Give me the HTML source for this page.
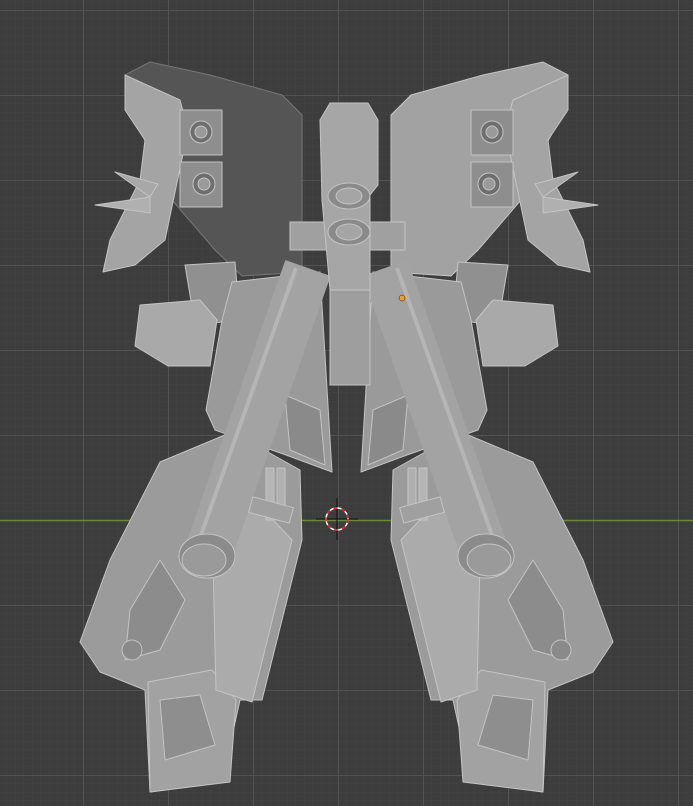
<!DOCTYPE html>
<html><head><meta charset="utf-8"><style>
html,body{margin:0;padding:0;background:#3d3d3d;width:693px;height:806px;overflow:hidden}
svg{display:block}
</style></head><body>
<svg width="693" height="806" viewBox="0 0 693 806" xmlns="http://www.w3.org/2000/svg">
<defs>
<pattern id="minor" width="8.5" height="8.5" patternUnits="userSpaceOnUse" x="83" y="10">
<path d="M0 0H8.5M0 0V8.5" stroke="#444" stroke-width="1" fill="none"/>
</pattern>
<pattern id="major" width="85" height="85" patternUnits="userSpaceOnUse" x="83" y="10">
<path d="M0 0.5H85M0.5 0V85" stroke="#525252" stroke-width="1" fill="none"/>
</pattern>
<g id="half" stroke="#c4c4c4" stroke-width="1" stroke-linejoin="round">
<!-- outer wing panel -->
<polygon points="125,75 180,100 188,130 165,240 135,265 103,272 110,240 140,180 145,140 125,110" fill="#a4a4a4"/>
<polygon points="95,205 150,197 150,213" fill="#b0b0b0"/>
<polygon points="115,172 158,184 150,197" fill="#a8a8a8"/>
<!-- pods -->
<rect x="180" y="110" width="42" height="45" fill="#8e8e8e"/>
<circle cx="201" cy="132" r="11" fill="#6e6e6e"/><circle cx="201" cy="132" r="6" fill="#9a9a9a"/>
<rect x="180" y="162" width="42" height="45" fill="#8e8e8e"/>
<circle cx="204" cy="184" r="11" fill="#6e6e6e"/><circle cx="204" cy="184" r="6" fill="#9a9a9a"/>
<!-- upper arm & shoulder -->
<polygon points="185,265 235,262 240,320 195,325" fill="#909090"/>
<polygon points="140,305 200,300 217,320 210,366 168,366 135,346" fill="#a9a9a9"/>
<!-- skirt -->
<polygon points="232,282 320,272 332,472 286,455 215,430 206,410 222,320" fill="#9a9a9a"/>
<polygon points="285,395 320,410 325,465 290,450" fill="#8a8a8a"/>
<!-- legs -->
<polygon points="110,560 160,462 232,432 300,470 302,540 262,700 240,700 222,782 150,792 145,690 100,672 80,642" fill="#9b9b9b"/>
<polygon points="130,610 160,560 185,600 160,650 125,660" fill="#8c8c8c"/>
<polygon points="148,682 212,670 236,700 230,782 150,792" fill="#a2a2a2"/>
<polygon points="160,700 200,695 215,745 165,760" fill="#8e8e8e"/>
<polygon points="212,520 262,508 292,540 252,702 216,690" fill="#ababab"/>
<circle cx="132" cy="650" r="10" fill="#8a8a8a"/>
<!-- pipes -->
<rect x="266" y="468" width="8" height="52" fill="#b5b5b5"/>
<rect x="277" y="468" width="8" height="52" fill="#b0b0b0"/>
<!-- cannon -->
<line x1="308" y1="268" x2="207" y2="556" stroke="#a3a3a3" stroke-width="48" stroke-linecap="butt"/>
<line x1="296" y1="268" x2="195" y2="552" stroke="#b5b5b5" stroke-width="4"/>
<ellipse cx="207" cy="556" rx="28" ry="22" fill="#8b8b8b"/>
<ellipse cx="204" cy="560" rx="22" ry="16" fill="#9a9a9a"/>
<rect x="250" y="502" width="42" height="16" fill="#a0a0a0" transform="rotate(15 271 510)"/>
</g>
</defs>
<rect width="693" height="806" fill="#3d3d3d"/>
<rect width="693" height="806" fill="url(#minor)"/>
<rect width="693" height="806" fill="url(#major)"/>
<line x1="0" y1="520.5" x2="693" y2="520.5" stroke="#6a8a3a" stroke-width="1.5"/>
<!-- wings -->
<polygon points="125,75 150,62 210,75 282,95 302,115 302,272 242,276 215,250 172,200 150,150 128,110" fill="#555" stroke="#777"/>
<polygon points="568,75 543,62 483,75 411,95 391,115 391,272 451,276 478,250 521,200 543,150 565,110" fill="#a2a2a2" stroke="#c4c4c4"/>
<use href="#half"/>
<use href="#half" transform="translate(693,0) scale(-1,1)"/>
<!-- center -->
<g stroke="#c4c4c4" stroke-width="1">
<rect x="290" y="222" width="115" height="28" fill="#a0a0a0"/>
<rect x="330" y="285" width="40" height="100" fill="#9e9e9e"/>
<polygon points="320,120 330,103 368,103 378,120 378,185 370,195 370,290 330,290 322,200" fill="#a6a6a6"/>
<ellipse cx="349" cy="196" rx="21" ry="13" fill="#8a8a8a"/><ellipse cx="349" cy="196" rx="13" ry="8" fill="#a5a5a5"/>
<ellipse cx="349" cy="232" rx="21" ry="13" fill="#8a8a8a"/><ellipse cx="349" cy="232" rx="13" ry="8" fill="#a5a5a5"/>
</g>
<!-- crosshair -->
<g>
<line x1="337" y1="498" x2="337" y2="540" stroke="#111" stroke-width="1"/>
<line x1="316" y1="519" x2="358" y2="519" stroke="#111" stroke-width="1"/>
<circle cx="337" cy="519" r="11" fill="none" stroke="#fff" stroke-width="1.5"/>
<circle cx="337" cy="519" r="11" fill="none" stroke="#d42020" stroke-width="1.5" stroke-dasharray="4 4"/>
</g>
<circle cx="402" cy="298" r="3" fill="#f39c1e" stroke="#222" stroke-width="0.5"/>
</svg>
</body></html>
